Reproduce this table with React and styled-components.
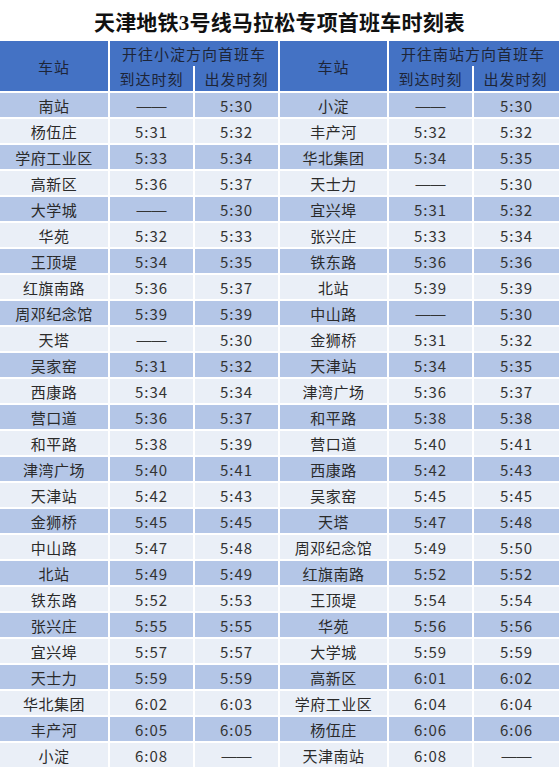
import React from 'react';
import styled, { createGlobalStyle } from 'styled-components';

const GlobalStyle = createGlobalStyle`
    html, body {
        margin: 0;
        padding: 0;
        background: #fff;
    }
    body {
        font-family: "Noto Sans CJK SC", "Noto Sans", sans-serif;
    }
`;

// 左半：开往小淀方向，右半：开往南站方向
const toXiaodian = [
    ['南站', '——', '5:30'],
    ['杨伍庄', '5:31', '5:32'],
    ['学府工业区', '5:33', '5:34'],
    ['高新区', '5:36', '5:37'],
    ['大学城', '——', '5:30'],
    ['华苑', '5:32', '5:33'],
    ['王顶堤', '5:34', '5:35'],
    ['红旗南路', '5:36', '5:37'],
    ['周邓纪念馆', '5:39', '5:39'],
    ['天塔', '——', '5:30'],
    ['吴家窑', '5:31', '5:32'],
    ['西康路', '5:34', '5:34'],
    ['营口道', '5:36', '5:37'],
    ['和平路', '5:38', '5:39'],
    ['津湾广场', '5:40', '5:41'],
    ['天津站', '5:42', '5:43'],
    ['金狮桥', '5:45', '5:45'],
    ['中山路', '5:47', '5:48'],
    ['北站', '5:49', '5:49'],
    ['铁东路', '5:52', '5:53'],
    ['张兴庄', '5:55', '5:55'],
    ['宜兴埠', '5:57', '5:57'],
    ['天士力', '5:59', '5:59'],
    ['华北集团', '6:02', '6:03'],
    ['丰产河', '6:05', '6:05'],
    ['小淀', '6:08', '——'],
];

const toNanzhan = [
    ['小淀', '——', '5:30'],
    ['丰产河', '5:32', '5:32'],
    ['华北集团', '5:34', '5:35'],
    ['天士力', '——', '5:30'],
    ['宜兴埠', '5:31', '5:32'],
    ['张兴庄', '5:33', '5:34'],
    ['铁东路', '5:36', '5:36'],
    ['北站', '5:39', '5:39'],
    ['中山路', '——', '5:30'],
    ['金狮桥', '5:31', '5:32'],
    ['天津站', '5:34', '5:35'],
    ['津湾广场', '5:36', '5:37'],
    ['和平路', '5:38', '5:38'],
    ['营口道', '5:40', '5:41'],
    ['西康路', '5:42', '5:43'],
    ['吴家窑', '5:45', '5:45'],
    ['天塔', '5:47', '5:48'],
    ['周邓纪念馆', '5:49', '5:50'],
    ['红旗南路', '5:52', '5:52'],
    ['王顶堤', '5:54', '5:54'],
    ['华苑', '5:56', '5:56'],
    ['大学城', '5:59', '5:59'],
    ['高新区', '6:01', '6:02'],
    ['学府工业区', '6:04', '6:04'],
    ['杨伍庄', '6:06', '6:06'],
    ['天津南站', '6:08', '——'],
];

const isDash = (v) => v === '——';

function App() {
    return (
        <>
            <GlobalStyle />
            <Page>
                <Title>天津地铁3号线马拉松专项首班车时刻表</Title>
                <Timetable>
                    <StationHead>车站</StationHead>
                    <GroupHead>
                        <GroupTitle>开往小淀方向首班车</GroupTitle>
                        <SubHead>到达时刻</SubHead>
                        <SubHead $divider>出发时刻</SubHead>
                    </GroupHead>
                    <StationHead>车站</StationHead>
                    <GroupHead>
                        <GroupTitle>开往南站方向首班车</GroupTitle>
                        <SubHead>到达时刻</SubHead>
                        <SubHead $divider>出发时刻</SubHead>
                    </GroupHead>

                    {toXiaodian.map((left, i) => {
                        const right = toNanzhan[i];
                        const striped = i % 2 === 0;
                        return (
                            <React.Fragment key={left[0] + i}>
                                <Cell $striped={striped}>{left[0]}</Cell>
                                <TimeCell $striped={striped} $dash={isDash(left[1])}>{left[1]}</TimeCell>
                                <TimeCell $striped={striped} $dash={isDash(left[2])}>{left[2]}</TimeCell>
                                <Cell $striped={striped}>{right[0]}</Cell>
                                <TimeCell $striped={striped} $dash={isDash(right[1])}>{right[1]}</TimeCell>
                                <TimeCell $striped={striped} $dash={isDash(right[2])}>{right[2]}</TimeCell>
                            </React.Fragment>
                        );
                    })}
                </Timetable>
            </Page>
        </>
    );
}

export default App;

const Page = styled.div`
    width: 559px;
    background: #fff;
`;

const Title = styled.h1`
    margin: 0;
    height: 41px;
    display: flex;
    align-items: center;
    justify-content: center;
    font-family: "Liberation Serif", "Noto Sans CJK SC", serif;
    font-weight: 700;
    font-size: 21px;
    color: #111;
    letter-spacing: 0.2px;
`;

const Timetable = styled.div`
    display: grid;
    grid-template-columns: 108px 83px 83px 107px 83px 85px;
    grid-auto-rows: 24px;
    gap: 2px;
    background: #fff;
`;

const StationHead = styled.div`
    grid-row: span 2;
    display: flex;
    align-items: center;
    justify-content: center;
    background: #4472c4;
    color: #1d2538;
    font-size: 15px;
    letter-spacing: 1px;
`;

const GroupHead = styled.div`
    grid-row: span 2;
    grid-column: span 2;
    display: grid;
    grid-template-columns: 83px 85px;
    grid-template-rows: 25px 25px;
    background: #4472c4;
`;

const GroupTitle = styled.div`
    grid-column: span 2;
    display: flex;
    align-items: center;
    justify-content: center;
    color: #1d2538;
    font-size: 15px;
    letter-spacing: 1px;
`;

const SubHead = styled.div`
    display: flex;
    align-items: center;
    justify-content: center;
    box-sizing: border-box;
    border-left: ${(p) => (p.$divider ? '2px solid #fff' : 'none')};
    color: #1d2538;
    font-size: 15px;
    letter-spacing: 1px;
`;

const Cell = styled.div`
    display: flex;
    align-items: center;
    justify-content: center;
    background: ${(p) => (p.$striped ? '#b4c6e7' : '#eaeff7')};
    color: #2a2a2a;
    font-size: 15px;
    letter-spacing: 0.5px;
    white-space: nowrap;
`;

const TimeCell = styled(Cell)`
    font-family: ${(p) => (p.$dash ? '"Liberation Sans", sans-serif' : 'inherit')};
    letter-spacing: ${(p) => (p.$dash ? '0' : '1px')};
    color: #333;
`;
